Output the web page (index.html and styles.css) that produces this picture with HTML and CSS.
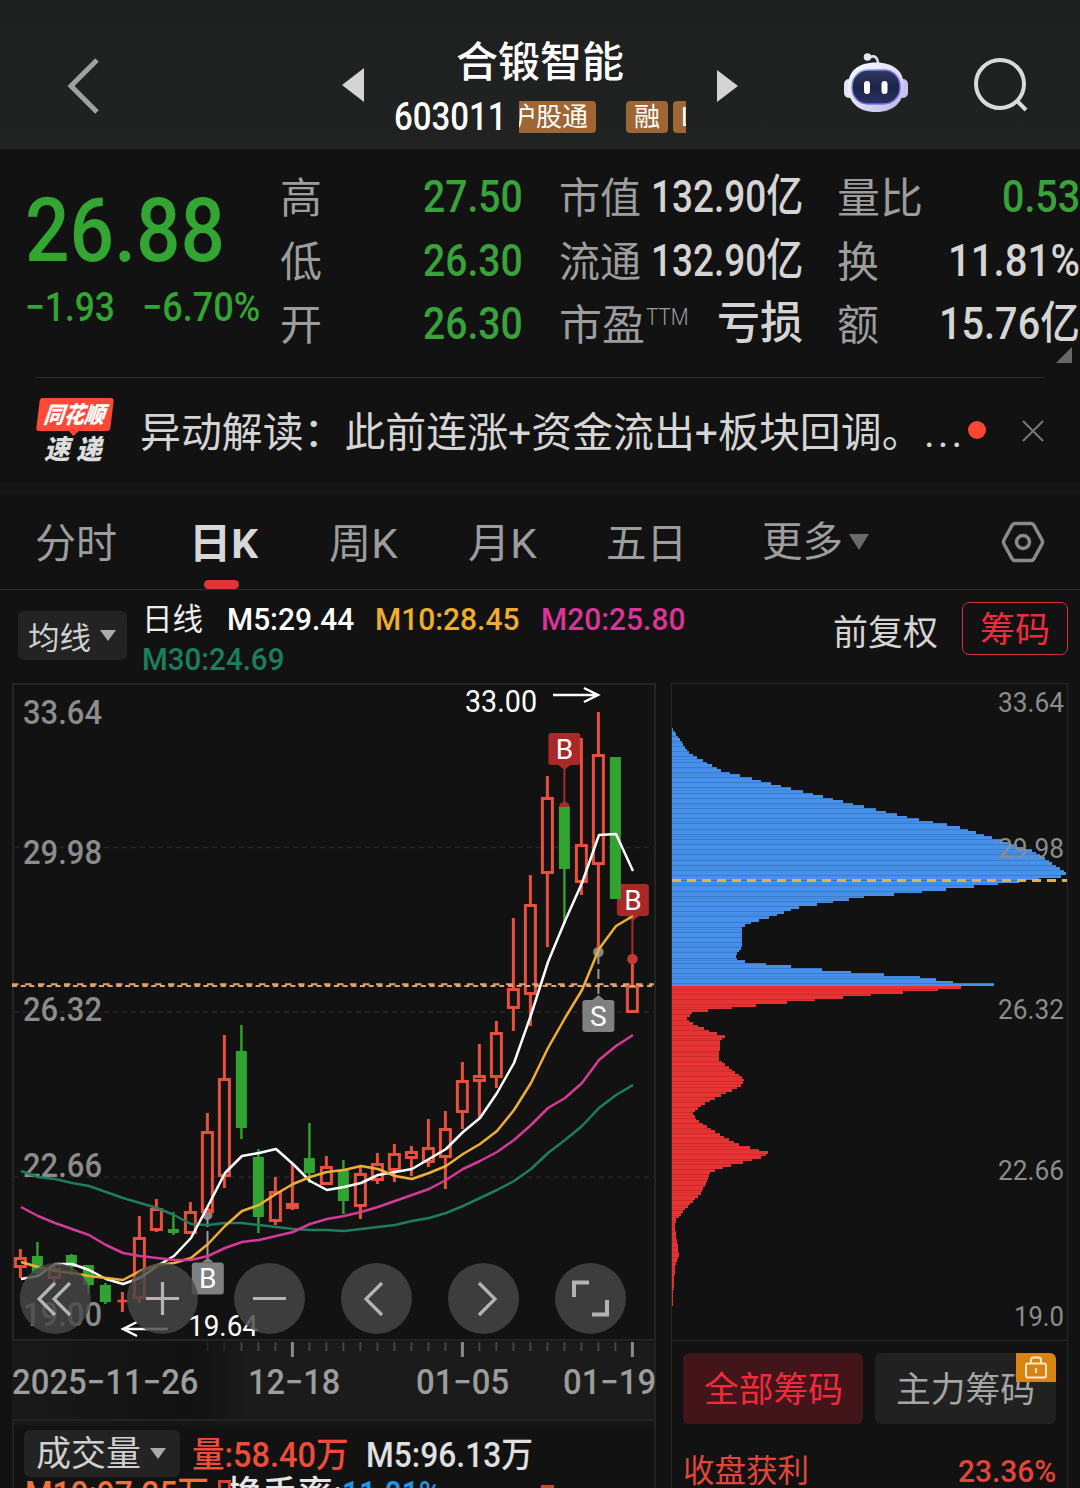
FILE: index.html
```html
<!DOCTYPE html>
<html lang="zh-CN">
<head>
<meta charset="utf-8">
<title>合锻智能 603011</title>
<link rel="stylesheet" href="styles.css">
</head>
<body>
<header class="top">
  <svg class="back" width="34" height="58" viewBox="0 0 34 58"><path d="M31 3 5 29 31 55"/></svg>
  <svg class="prev" width="22" height="36" viewBox="0 0 22 36"><path d="M22 1V35L0 18z"/></svg>
  <div class="ident">
    <h1><span data-w="168">合锻智能</span></h1>
    <div class="code-row">
      <span class="code" data-w="113">603011</span>
      <div class="tags"><div class="track"><b>沪股通</b><b class="gap">融</b><b>L1</b></div></div>
    </div>
  </div>
  <svg class="next" width="21" height="34" viewBox="0 0 21 34"><path d="M0 1V33L21 17z"/></svg>
  <svg class="robot" width="66" height="62" viewBox="0 0 66 62">
    <defs>
      <linearGradient id="shell" x1="0" y1="0" x2="1" y2="1"><stop offset="0" stop-color="#fff"/><stop offset=".55" stop-color="#dcdcf8"/><stop offset="1" stop-color="#b4b2e2"/></linearGradient>
      <linearGradient id="visor" x1="0" y1="0" x2="0" y2="1"><stop offset="0" stop-color="#343a60"/><stop offset=".5" stop-color="#1c2447"/><stop offset="1" stop-color="#263263"/></linearGradient>
      <linearGradient id="rim" x1="0" y1="0" x2="1" y2="1"><stop offset="0" stop-color="#79c8ef"/><stop offset=".5" stop-color="#7e59dc"/><stop offset="1" stop-color="#8178f0"/></linearGradient>
    </defs>
    <path d="M27 5c5-2 8 1 8 7" fill="none" stroke="#dadaf0" stroke-width="2.500"/><circle cx="24.500" cy="5" r="3.800" fill="#e6e6f6"/>
    <rect x="1" y="27" width="10" height="19" rx="5" fill="#e4e4f8"/><rect x="55" y="27" width="10" height="19" rx="5" fill="#c4c3ec"/>
    <path d="M33 10.500c18 0 28 9 28 24S51 60 33 60 5 50 5 34.500s10-24 28-24z" fill="url(#shell)"/>
    <rect x="9" y="18" width="48" height="34" rx="16" fill="url(#visor)" stroke="url(#rim)" stroke-width="1.500"/>
    <rect x="21" y="29" width="6" height="13" rx="3" fill="#fff"/><rect x="38.500" y="29" width="6" height="13" rx="3" fill="#fff"/>
  </svg>
  <svg class="search" width="56" height="56" viewBox="0 0 56 56"><circle cx="27" cy="27" r="24"/><path d="M44 44 53 53"/></svg>
</header>

<section class="quote">
  <div class="price">
    <div class="last"><span data-w="200">26.88</span></div>
    <div class="delta"><span data-w="90">−1.93</span><span data-w="118">−6.70%</span></div>
  </div>
  <dl class="c1">
    <dt><span data-w="42">高</span></dt><dd class="g"><span data-w="100">27.50</span></dd>
    <dt><span data-w="42">低</span></dt><dd class="g"><span data-w="100">26.30</span></dd>
    <dt><span data-w="42">开</span></dt><dd class="g"><span data-w="100">26.30</span></dd>
  </dl>
  <dl class="c2">
    <dt><span data-w="82">市值</span></dt><dd><span data-w="152">132.90亿</span></dd>
    <dt><span data-w="82">流通</span></dt><dd><span data-w="152">132.90亿</span></dd>
    <dt><span data-w="86">市盈</span><sup><span data-w="43">TTM</span></sup></dt><dd><span data-w="86">亏损</span></dd>
  </dl>
  <dl class="c3">
    <dt><span data-w="86">量比</span></dt><dd class="g"><span data-w="78">0.53</span></dd>
    <dt><span data-w="42">换</span></dt><dd><span data-w="132">11.81%</span></dd>
    <dt><span data-w="42">额</span></dt><dd><span data-w="141">15.76亿</span></dd>
  </dl>
  <i class="corner"></i>
</section>

<section class="news">
  <div class="brand"><div class="bubble"><span data-w="61">同花顺</span></div><div class="express"><span data-w="58">速 递</span></div></div>
  <p><span data-w="783">异动解读：此前连涨+资金流出+板块回调。</span><span class="dots">...</span></p>
  <i class="dot"></i>
  <svg class="close" width="22" height="22" viewBox="0 0 22 22"><path d="M1 1 21 21M21 1 1 21"/></svg>
</section>

<nav class="tabs">
  <a class="t1"><span data-w="82">分时</span></a>
  <a class="t2 on"><span data-w="69">日K</span></a>
  <a class="t3"><span data-w="69">周K</span></a>
  <a class="t4"><span data-w="69">月K</span></a>
  <a class="t5"><span data-w="81">五日</span></a>
  <a class="t6"><span data-w="81">更多</span><i class="caret big"></i></a>
  <svg class="gear" width="44" height="42" viewBox="0 0 44 42"><path d="M14 2.500H30Q32 2.500 33 4.300L41 19Q42 21 41 23L33 37.700Q32 39.500 30 39.500H14Q12 39.500 11 37.700L3 23Q2 21 3 19L11 4.300Q12 2.500 14 2.500z"/><circle cx="22" cy="21" r="6.500"/></svg>
</nav>

<section class="legend">
  <button class="pick ma"><span data-w="63">均线</span><i class="caret"></i></button>
  <div class="lines">
    <div><span class="kind" data-w="61">日线</span><span class="m5" data-w="127">M5:29.44</span><span class="m10" data-w="144">M10:28.45</span><span class="m20" data-w="144">M20:25.80</span></div>
    <div><span class="m30" data-w="142">M30:24.69</span></div>
  </div>
  <span class="adj"><span data-w="105">前复权</span></span>
  <button class="chipbtn"><span data-w="70">筹码</span></button>
</section>

<main class="panels">
  <div class="left">
    <div class="kchart">
      <svg id="kline" width="644" height="658" viewBox="12 683 644 658"></svg>
      <svg class="tools" width="644" height="658" viewBox="12 683 644 658">
        <g class="disc"><circle cx="55.300" cy="1298.500" r="35.500"/><circle cx="162.300" cy="1298.500" r="35.500"/><circle cx="269.500" cy="1298.500" r="35.500"/><circle cx="376.500" cy="1298.500" r="35.500"/><circle cx="483.500" cy="1298.500" r="35.500"/><circle cx="590.500" cy="1298.500" r="35.500"/></g>
        <path class="glyph" d="M55 1283 39 1299 55 1315M70 1283 54 1299 70 1315M146 1298.500H179M162.500 1282V1315M253 1298.500H286M382 1283 366 1299 382 1315M479 1283 495 1299 479 1315"/>
        <path class="glyph corners" d="M574 1297V1282.500H589M592 1314.500H607V1300"/>
      </svg>
    </div>
    <div class="axis">
      <svg id="ticks" width="644" height="16" viewBox="12 1342 644 16"></svg>
      <div class="dates"><span data-w="187">2025−11−26</span><span data-w="92">12−18</span><span data-w="93">01−05</span><span data-w="93">01−19</span></div>
    </div>
    <div class="volume">
      <div class="row">
        <button class="pick vol"><span data-w="105">成交量</span><i class="caret"></i></button>
        <span class="v1" data-w="157">量:58.40万</span><span class="v2" data-w="167">M5:96.13万</span>
      </div>
      <div class="row second"><span class="v3" data-w="184">M10:97.25万</span><span class="v4" data-w="115">换手率:</span><span class="v5" data-w="99">11.81%</span></div>
      <i class="bar a"></i><i class="bar b"></i>
    </div>
  </div>
  <div class="right">
    <svg id="chips" width="397" height="658" viewBox="671 683 397 658"></svg>
    <div class="modes">
      <button class="mode on"><span data-w="139">全部筹码</span></button>
      <button class="mode"><span data-w="139">主力筹码</span>
        <i class="lock"><svg width="24" height="26" viewBox="0 0 24 26"><rect x="2" y="8.500" width="20" height="14" rx="2"/><path d="M7 8V5Q7 2.500 9.500 2.500H14.500Q17 2.500 17 5V8M12 13V18"/></svg></i>
      </button>
    </div>
    <div class="profit"><span data-w="126">收盘获利</span><span class="pct" data-w="98">23.36%</span></div>
  </div>
</main>
<script src="chart.js"></script>
</body>
</html>
```
FILE: styles.css
```css
* { box-sizing: border-box; }
body { margin: 0; width: 1080px; height: 1488px; overflow: hidden; background: #121212; color: #d5d5d5; font-family: Roboto, "Noto Sans CJK SC", sans-serif; }
h1, p, dl, dd, dt { margin: 0; font-weight: 400; }
button { border: 0; padding: 0; font: inherit; color: inherit; }
svg { display: block; flex: none; }
[data-w] { display: inline-block; flex: none; white-space: nowrap; text-align: left; }
.squeeze { display: inline-block; transform-origin: 0 50%; }

.top { height: 149px; background: linear-gradient(#1e201f, #202322); display: flex; }
.back { margin: 57px 0 0 66px; fill: none; stroke: #a1a1a1; stroke-width: 5; }
.prev { margin: 67px 0 0 242px; fill: #d4d4d4; }
.ident { width: 292px; margin-left: 30px; padding-top: 38px; }
h1 { height: 50px; line-height: 50px; padding-left: 62px; font-size: 42px; font-weight: 500; color: #fff; }
.code-row { display: flex; align-items: center; height: 60px; margin-top: -1px; }
.code { font-size: 38px; font-weight: 500; color: #fff; line-height: 62px; }
.tags { width: 167px; height: 32px; margin-left: 12px; overflow: hidden; }
.track { display: flex; margin-left: -17px; }
.track b { flex: none; height: 32px; line-height: 33px; padding: 0 8px; margin-right: 5px; border-radius: 4px; background: #a06534; color: #fff; font-size: 26px; font-weight: 400; }
.track .gap { margin-left: 25px; }
.next { margin: 69px 0 0 31px; fill: #d4d4d4; }
.robot { margin: 52px 0 0 105px; }
.search { margin: 57px 0 0 64px; fill: none; stroke: #dadada; stroke-width: 4; }

.quote { height: 229px; display: flex; position: relative; padding-top: 16px; }
.quote::after { content: ""; position: absolute; left: 35px; right: 35px; bottom: 0; height: 1px; background: #2e2e2e; }
.price { width: 280px; padding-left: 25px; color: #33a532; font-weight: 500; }
.last { height: 110px; line-height: 132px; font-size: 89px; }
.delta { display: flex; gap: 27px; font-size: 40px; line-height: 65px; }
dl { display: grid; grid-template-columns: 92px 1fr; grid-auto-rows: 63.500px; line-height: 64px; height: 191px; }
dt { font-size: 42px; color: #9d9d9d; display: flex; line-height: 67px; white-space: nowrap; }
dd { font-size: 45px; font-weight: 500; text-align: right; }
dd.g { color: #3aa23a; }
.c1 { width: 243px; }
.c2 { width: 243px; margin-left: 36px; }
.c3 { width: 243px; margin-left: 35px; }
sup { font-size: 24px; font-weight: 300; line-height: 51px; margin-left: 1px; }
.corner { position: absolute; left: 1056px; top: 198px; border-left: 16px solid transparent; border-bottom: 16px solid #686868; }

.news { box-sizing: content-box; width: 1044px; height: 105px; border-bottom: 12px solid #161616; padding-left: 36px; display: flex; }
.brand { width: 80px; padding-top: 20px; font-weight: 900; font-style: italic; }
.bubble { width: 74px; height: 33px; margin-left: 2px; border-radius: 3px; background: #ff4936; color: #fff; transform: skewX(-7deg); font-size: 23px; line-height: 35px; padding-left: 6px; position: relative; }
.bubble::after { content: ""; position: absolute; left: 32px; top: 32px; border: 6px solid transparent; border-top-color: #ff4936; border-bottom: 0; }
.express { padding: 4px 0 0 8px; font-size: 27px; line-height: 30px; color: #ddd; }
.news p { width: 825px; height: 105px; margin-left: 24px; font-size: 41px; line-height: 110px; white-space: nowrap; display: flex; }
.dots { letter-spacing: 3px; margin-left: 1px; }
.dot { width: 18px; height: 18px; border-radius: 9px; background: #ff4632; margin: 43px 36px 0 3px; }
.close { margin-top: 42px; fill: none; stroke: #777; stroke-width: 2; }

.tabs { height: 95px; border-bottom: 1px solid #2d2d2d; display: flex; align-items: center; font-size: 41px; color: #9d9d9d; }
.tabs a { height: 94px; line-height: 99px; display: flex; position: relative; }
.t1 { margin-left: 35px; }
.t2 { margin-left: 72px; }
.t3 { margin-left: 71px; }
.t4 { margin-left: 70px; }
.t5 { margin-left: 69px; }
.t6 { margin-left: 75px; align-items: center; }
.tabs .on { color: #d8d8d8; font-weight: 700; }
.on::after { content: ""; position: absolute; left: 15px; bottom: 0; width: 35px; height: 9px; border-radius: 5px; background: #e43434; }
.mode.on::after { display: none; }
.caret { width: 0; height: 0; border: 8px solid transparent; border-top: 11px solid #aaa; border-bottom: 0; }
.caret.big { border-width: 16px 10px 0; border-top-color: #6a6a6a; margin-left: 6px; }
.gear { margin-left: 132px; fill: none; stroke: #8a8a8a; stroke-width: 3.500; }

.legend { height: 92px; display: flex; }
.pick { background: #232323; border-radius: 6px; display: flex; align-items: center; color: #d0d0d0; }
.ma { width: 109px; height: 49px; margin: 21px 0 0 18px; padding-left: 10px; gap: 9px; font-size: 31px; }
.lines { width: 690px; padding: 9px 0 0 15px; font-size: 32px; font-weight: 500; line-height: 40px; }
.lines div { display: flex; height: 40px; }
.kind { margin-right: 24px; font-size: 31px; font-weight: 400; line-height: 42px; color: #eee; }
.m5 { color: #fff; margin-right: 21px; }
.m10 { color: #f0ad2d; margin-right: 22px; }
.m20 { color: #d93597; }
.m30 { color: #1a7f5b; }
.adj { margin-left: 16px; width: 129px; font-size: 35px; line-height: 88px; }
.chipbtn { width: 106px; height: 53px; margin-top: 12px; border: 1.500px solid #c9363d; border-radius: 7px; background: transparent; color: #ef2c3b; font-size: 35px; text-align: center; line-height: 55px; }

.panels { display: flex; height: 806px; }
.left { width: 644px; margin: 1px 15px 0 12px; }
.kchart { position: relative; height: 658px; }
.tools { position: absolute; left: 0; top: 0; }
.disc { fill: #474747; opacity: .82; }
.glyph { fill: none; stroke: #b4b4b4; stroke-width: 3.200; }
.corners { stroke-width: 4; }
svg text { font-weight: 500; }
.axis { height: 77px; margin-top: 1px; background: linear-gradient(90deg, #191919, #121212 175px, #131313 190px, #1b1b1b 240px); border-right: 2px solid #222; }
.dates { height: 50px; display: flex; font-size: 35px; font-weight: 500; line-height: 50px; color: #858585; }
.dates span:first-child { color: #9d9d9d; }
.dates > :nth-child(2) { margin-left: 49px; }
.dates > :nth-child(3) { margin-left: 76px; }
.dates > :nth-child(4) { margin-left: 54px; }
.volume { position: relative; height: 69px; border: 2px solid #222; border-bottom: 0; padding: 9px 0 0 10px; overflow: hidden; box-shadow: inset 0 5px #171717; }
.row { display: flex; font-size: 35px; font-weight: 500; line-height: 51px; height: 47px; }
.vol { width: 156px; padding-left: 12px; gap: 9px; font-size: 35px; font-weight: 400; }
.vol span { padding-top: 1px; }
.v1 { margin-left: 12px; color: #f04c3a; }
.v2 { margin-left: 17px; color: #e0e0e0; }
.second { margin-top: -8px; }
.v3 { color: #f0723a; margin-left: 1px; }
.v4 { color: #e5e5e5; margin-left: 18px; }
.v5 { color: #2196e8; }
.bar { position: absolute; width: 13px; height: 20px; border: 3px solid #d8402f; }
.a { left: 204px; top: 59px; }
.b { left: 527px; top: 64px; }

.right { width: 397px; margin-top: 1px; border-left: 1px solid #272727; border-right: 1px solid #272727; }
#chips { margin-left: -1px; }
.modes { display: flex; gap: 12px; padding: 12px 0 0 11px; }
.mode { position: relative; width: 180px; height: 71px; border-radius: 6px; background: #212121; color: #a5a5a5; font-size: 35px; line-height: 76px; }
.mode.on { background: #42151a; color: #f02b3c; }
.mode + .mode { width: 181px; }
.lock { position: absolute; right: 0; top: 0; width: 40px; height: 29px; background: #d88312; border-top-right-radius: 6px; padding: 2px 8px; }
.lock svg { fill: none; stroke: #ffe9c6; stroke-width: 2; }
.profit { display: flex; justify-content: space-between; padding: 23px 11px 0 11px; font-size: 32px; line-height: 49px; color: #e3453a; }
.pct { font-weight: 500; }
```
FILE: chart.js
```js
document.querySelectorAll('[data-w]').forEach(el => {
  const inner = document.createElement('span');
  inner.className = 'squeeze';
  inner.append(...el.childNodes);
  el.append(inner);
  const w = Number(el.dataset.w);
  inner.style.transform = `scaleX(${w / inner.offsetWidth})`;
  el.style.width = w + 'px';
});

const RED = '#e84f3d', GREEN = '#30a330';
const X = i => 20.4 + 17 * i;
// high, body top, body bottom, low, rising
const candles = [
  [1249,1257,1268,1278,1],[1242,1256,1273,1275,0],[1266,1268,1279,1283,1],[1254,1255,1267,1275,0],[1265,1265,1285,1293,0],
  [1283,1285,1302,1304,0],[1292,1300,1302,1312,1],[1216,1237,1299,1303,1],[1199,1208,1231,1232,1],[1212,1229,1233,1235,0],
  [1202,1211,1234,1234,1],[1113,1131,1213,1213,1],[1035,1078,1177,1188,1],[1025,1051,1128,1139,0],[1149,1157,1217,1233,0],
  [1177,1191,1222,1225,1],[1163,1203,1209,1210,1],[1123,1158,1173,1183,0],[1156,1166,1185,1185,1],[1160,1170,1201,1214,0],
  [1167,1173,1207,1219,1],[1153,1163,1181,1184,1],[1144,1153,1171,1182,1],[1146,1151,1159,1176,1],[1119,1147,1163,1167,1],
  [1111,1128,1158,1189,1],[1062,1080,1113,1129,1],[1044,1075,1082,1119,1],[1021,1032,1078,1088,1],[918,988,1009,1031,1],
  [875,904,995,1026,1],[776,797,874,947,1],[807,807,869,924,0],[738,844,883,895,1],[712,754,865,948,1],[757,757,899,899,0],[960,985,1013,1013,1]
];
const averages = [
  ['#1f7d5f',[1171,1177,1179,1183,1186,1192,1198,1203,1208,1215,1224,1225,1223,1223,1225,1227,1229,1230,1230,1231,1229,1227,1225,1221,1218,1213,1206,1198,1190,1181,1169,1153,1140,1126,1108,1095,1085]],
  ['#fff',[1279,1276,1264,1264,1270,1279,1284,1278,1266,1256,1238,1206,1173,1156,1153,1149,1164,1181,1190,1187,1183,1175,1172,1169,1159,1149,1132,1118,1093,1063,1015,962,921,883,835,834,871]],
  ['#f0ae36',[1262,1267,1271,1273,1276,1278,1280,1271,1265,1263,1258,1244,1226,1211,1205,1194,1184,1177,1172,1170,1166,1169,1176,1179,1173,1166,1154,1144,1131,1110,1083,1048,1018,990,949,926,916]],
  ['#d63a97',[1207,1216,1223,1229,1235,1245,1253,1256,1258,1260,1260,1256,1248,1242,1240,1236,1232,1224,1219,1216,1212,1207,1201,1195,1189,1180,1169,1161,1152,1140,1125,1108,1098,1083,1060,1046,1035]]
];
const label = (x, y, w, size, fill, t, weight = 500) =>
  `<text x="${x}" y="${y}" font-size="${size}" textLength="${w}" lengthAdjust="spacingAndGlyphs" fill="${fill}" style="font-weight:${weight}">${t}</text>`;
const line = (x1, y1, x2, y2, c, w, extra = '') =>
  `<line x1="${x1}" y1="${y1}" x2="${x2}" y2="${y2}" stroke="${c}" stroke-width="${w}" ${extra}/>`;

let k = '<rect x="13" y="684" width="642" height="656" fill="none" stroke="#242424" stroke-width="2"/>';
[847.5, 1012, 1177].forEach(y => k += line(14, y, 654, y, '#262626', 1.5, 'stroke-dasharray="5 4"'));

const flag = (x, y, t, fill, up) =>
  `<rect x="${x - 16}" y="${y}" width="32" height="32" rx="3" fill="${fill}"/>` +
  (up ? `<path d="M${x - 6} ${y}L${x} ${y - 5}L${x + 6} ${y}z" fill="${fill}"/>` : `<path d="M${x - 6} ${y + 32}L${x} ${y + 37}L${x + 6} ${y + 32}z" fill="${fill}"/>`) +
  `<text x="${x}" y="${y + 25.500}" font-size="28" fill="#fff" text-anchor="middle" style="font-weight:400">${t}</text>`;

k += line(564.4, 767, 564.4, 806, '#a92c2c', 2) + '<circle cx="564.4" cy="807" r="5.3" fill="#a52b2b"/>';
k += flag(564.4, 733, 'B', '#a92929', false) + flag(632.9, 884, 'B', '#a92929', false);
candles.forEach(([h, t, b, l, up], i) => {
  const x = X(i), c = up ? RED : GREEN;
  k += line(x, h, x, t, c, up ? 3 : 2.4) + line(x, b, x, l, c, up ? 3 : 2.4);
  if (!up) k += `<rect x="${x - 5.5}" y="${t}" width="11" height="${b - t}" fill="${c}"/>`;
  else if (b - t < 4) k += line(x - 5, 1301, x + 5, 1301, c, 2.5);
  else k += `<rect x="${x - 5}" y="${t + 1.500}" width="10" height="${b - t - 3}" fill="${i === 16 ? RED : '#121212'}" stroke="${c}" stroke-width="3"/>`;
});
k += line(632.4, 916, 632.4, 956, '#a92c2c', 2) + '<circle cx="632.4" cy="959" r="5.3" fill="#c23832"/>';
k += '<circle cx="598.4" cy="952" r="5.3" fill="#858585"/>' + line(598.4, 954, 598.4, 997, '#999', 2, 'stroke-dasharray="10 5"') + flag(598.4, 1000, 'S', '#808080', true);
k += '<circle cx="207.5" cy="1215" r="5" fill="#858585"/><path d="M202.500 1213a5 5 0 0 1 10 0z" fill="#e84f3d"/>' + line(207.5, 1217, 207.5, 1258, '#999', 2, 'stroke-dasharray="10 4 27 1"');

[[712,'33.64'],[852,'29.98'],[1009,'26.32'],[1165,'22.66'],[1314,'19.00']].forEach(([y, t]) => k += label(23, y + 12, 79, 34, '#8c8c8c', t));
averages.forEach(([c, ys]) => k += `<polyline points="${ys.map((y, i) => X(i) + 0.6 + ',' + y).join(' ')}" fill="none" stroke="${c}" stroke-width="2.5" stroke-linejoin="round"/>`);
k += flag(207.8, 1262.5, 'B', '#808080', true);
k += line(12, 984.3, 654, 984.3, '#dda56d', 2, 'stroke-dasharray="6.500 6.500"') + line(12, 986, 654, 986, '#dda56d', 2, 'stroke-dasharray="5 3.700"');
k += label(465, 712, 72, 31, '#fff', '33.00', 400) + label(188, 1336, 70, 30, '#fff', '19.64', 400);
k += '<path d="M553 695H597M584 688 598 695 584 702M168 1329H123M137 1322 123 1329 137 1336" fill="none" stroke="#fff" stroke-width="2.400"/>';
document.getElementById('kline').innerHTML = k;

let tk = '';
for (let i = 11; i <= 36; i++) {
  const major = i === 16 || i === 26 || i === 36;
  tk += line(X(i), 1342, X(i), major ? 1357 : 1351, major ? '#8a8a8a' : '#444', major ? 3 : 2, i < 13 ? 'opacity=".35"' : '');
}
document.getElementById('ticks').innerHTML = tk;

// Chip distribution outline: price row -> bar end.
const outline = [[728,672],[753,689],[771,722],[789,793],[802,845],[818,911],[826,955],[840,1000],[850,1031],[872,1066],[876,1067],[877.5,1050],[883,1008],[888,960],[893,912],[897,864],[901,840],[907,800],[914,780],[925,745],[928,742],[948,741.5],[955,736],[960,737],[962,747],[965,776],[968,805],[973,863],[977,920],[981,945],[984,969],[986,994],[987,966],[990,938],[994,882],[999,826],[1004,770],[1007,741],[1010,713],[1012,693],[1019,686],[1023,692],[1031,709],[1034,718],[1036,726],[1041,720],[1060,719],[1079,744],[1086,741],[1096,720],[1105,702],[1113,693],[1120,697],[1137,724],[1145,740],[1148,752],[1153,770],[1158,760],[1166,729],[1172,710],[1181,707],[1193,701],[1208,686],[1220,676],[1228,675],[1256,679],[1265,675],[1300,673],[1312,672]];
const edge = y => {
  const n = outline.findIndex(p => p[0] >= y);
  if (n < 1) return 672;
  const [y0, x0] = outline[n - 1], [y1, x1] = outline[n];
  return x0 + (x1 - x0) * (y - y0) / (y1 - y0);
};
let c = '<rect x="671.5" y="683.5" width="396" height="657" fill="none" stroke="#272727"/><g shape-rendering="crispEdges">';
const step = 2.58;
for (let n = 0; n * step < 584; n++) {
  const y = Math.round(728 + n * step), end = Math.round(728 + (n + 1) * step);
  const blue = y < 986;
  const w = Math.round((y < 986 && end >= 986 ? 994 : edge((y + end) / 2)) - 672);
  c += `<rect x="672" y="${y}" width="${w}" height="${end - y}" fill="${blue ? '#4891ea' : '#e63333'}"/>`;
  if (n % 2) c += `<rect x="672" y="${y}" width="${w}" height="1" fill="${blue ? '#397bcb' : '#cc2a2b'}"/>`;
  else if (n % 6 === 0) c += `<rect x="672" y="${y}" width="${w}" height="1" fill="${blue ? '#4085da' : '#d82f2f'}"/>`;
}
c += '</g>' + line(672, 880.5, 1067, 880.5, '#dcb54c', 3, 'stroke-dasharray="9 6"');
[[712,'33.64'],[858,'29.98'],[1019,'26.32'],[1180,'22.66']].forEach(([y, t]) => c += label(998, y, 66, 27, '#8c8c8c', t, 400));
c += label(1014, 1326, 50, 27, '#8c8c8c', '19.0', 400);
document.getElementById('chips').innerHTML = c;
```
